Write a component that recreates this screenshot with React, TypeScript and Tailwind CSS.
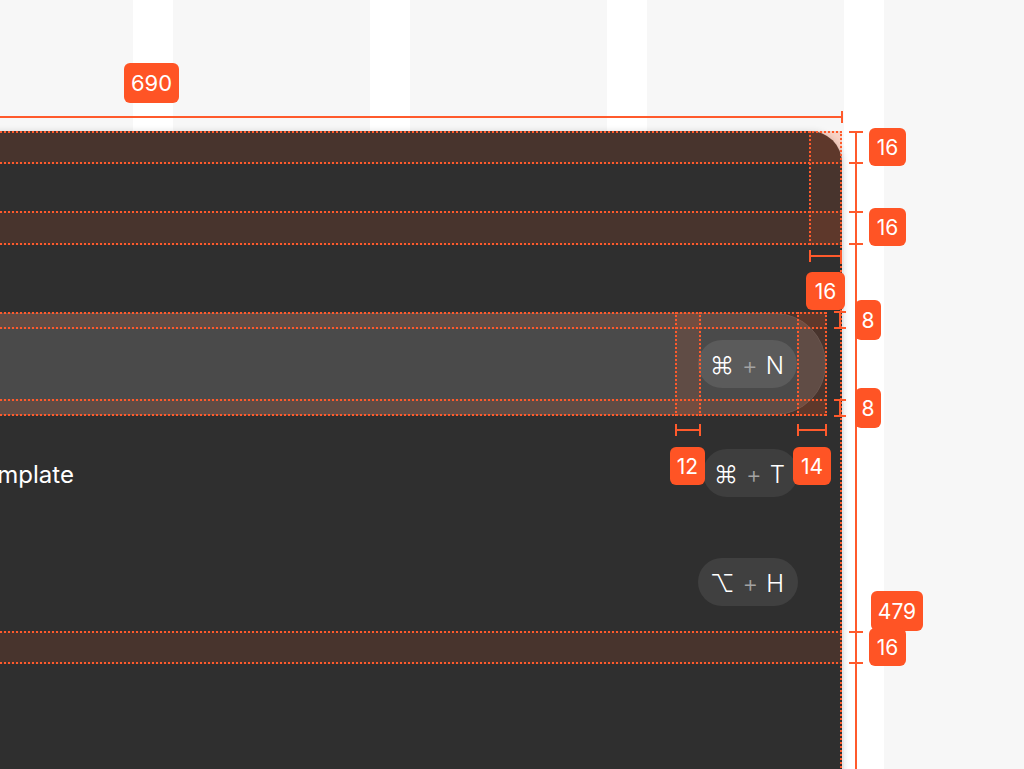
import clsx from 'clsx';

const ORANGE = 'bg-[#ff5a2c]';

function Tag({ text, className }: { text: string; className: string }) {
  return (
    <div
      className={clsx(
        'absolute flex items-center justify-center rounded-[6px] bg-[#ff5425] text-[21px] leading-none text-white',
        className,
      )}
    >
      {text}
    </div>
  );
}

function HBracket({ className }: { className: string }) {
  return (
    <div className={clsx('absolute flex h-[12px] items-center border-x-2 border-[#ff5a2c]', className)}>
      <div className={clsx('h-[2px] w-full', ORANGE)} />
    </div>
  );
}

function VBracket({ className }: { className: string }) {
  return (
    <div className={clsx('absolute flex w-[12px] justify-center border-y-2 border-[#ff5a2c]', className)}>
      <div className={clsx('h-full w-[2px]', ORANGE)} />
    </div>
  );
}

function Tick({ className }: { className: string }) {
  return <div className={clsx('absolute left-[849px] h-[2px] w-[14px]', ORANGE, className)} />;
}

function Keycap({ mod, keyName, tone }: { mod: string; keyName: string; tone: string }) {
  return (
    <div className={clsx('flex h-12 items-center gap-[8px] rounded-full pt-[3px] text-[24px] font-light text-white', tone)}>
      <span>{mod}</span>
      <span className="text-[#a3a3a3]">+</span>
      <span>{keyName}</span>
    </div>
  );
}

const rows = [
  { label: 'New note', mod: '⌘', key: 'N', active: true, tone: 'bg-[#5b5b5b] pl-[12px] pr-[13px]' },
  { label: 'New from template', mod: '⌘', key: 'T', active: false, tone: 'bg-[#3e3e3e] pl-[11px] pr-[13px]' },
  { label: 'History', mod: '⌥', key: 'H', active: false, tone: 'bg-[#404040] pl-[12px] pr-[14px]' },
];

export default function App() {
  return (
    <div
      className="relative h-[769px] w-[1024px] overflow-hidden bg-[#f7f7f7] pt-[131px]"
      style={{ fontFamily: 'Inter, "DejaVu Sans", sans-serif' }}
    >
      {/* grid columns */}
      <div className="absolute inset-0 flex gap-[197px] pl-[133px]">
        <div className="h-full w-[40px] bg-white" />
        <div className="h-full w-[40px] bg-white" />
        <div className="h-full w-[40px] bg-white" />
        <div className="h-full w-[40px] bg-white" />
      </div>

      {/* panel */}
      <div className="relative ml-[-538px] flex h-[760px] w-[1380px] flex-col rounded-[32px] bg-[#2f2f2f] p-8 shadow-[2px_0_6px_rgba(0,0,0,0.12)]">
        <div className="h-12 shrink-0" />
        <div className="mt-[33px] h-[69px] shrink-0" />
        <div className="-mx-4 flex flex-col gap-[7px]">
          {rows.map((r) => (
            <div
              key={r.label}
              className={clsx(
                'flex h-[102px] items-center gap-6 rounded-full py-4 pl-8 pr-[28px]',
                r.active && 'border border-[#565656] bg-[#4a4a4a]',
              )}
            >
              <span className="flex-1 pl-[348px] pt-[3px] text-[24px] text-white">{r.label}</span>
              <Keycap mod={r.mod} keyName={r.key} tone={r.tone} />
            </div>
          ))}
        </div>
      </div>

      {/* shaded spacing overlays */}
      <div className="absolute left-0 top-[131px] h-[33px] w-[842px] border-y-2 border-dotted border-[#ff5a2c] bg-[#ff5722]/12" />
      <div className="absolute left-0 top-[211px] h-[34px] w-[842px] border-y-2 border-dotted border-[#ff5a2c] bg-[#ff5722]/12" />
      <div className="absolute left-[809px] top-[131px] h-[114px] w-[33px] border-l-2 border-dotted border-[#ff5a2c] bg-[#ff5722]/12" />
      <div className="absolute left-[840px] top-[131px] h-[640px] w-[2px] border-l-2 border-dotted border-[#ff5a2c]" />

      <div className="absolute left-0 top-[312px] h-[17px] w-[826px] border-y-2 border-dotted border-[#ff5a2c] bg-[#ff5722]/12" />
      <div className="absolute left-0 top-[399px] h-[17px] w-[826px] border-y-2 border-dotted border-[#ff5a2c] bg-[#ff5722]/12" />
      <div className="absolute left-[675px] top-[312px] h-[104px] w-[26px] border-x-2 border-dotted border-[#ff5a2c] bg-[#ff5722]/12" />
      <div className="absolute left-[797px] top-[312px] h-[104px] w-[30px] border-x-2 border-dotted border-[#ff5a2c] bg-[#ff5722]/12" />

      <div className="absolute left-0 top-[631px] h-[33px] w-[842px] border-y-2 border-dotted border-[#ff5a2c] bg-[#ff5722]/12" />

      {/* width measure */}
      <div className={clsx('absolute left-0 top-[116px] h-[2px] w-[842px]', ORANGE)} />
      <div className={clsx('absolute left-[841px] top-[111px] h-[12px] w-[2px]', ORANGE)} />
      <Tag text="690" className="left-[124px] top-[63px] h-[40px] w-[55px] text-[22px]" />

      {/* vertical measure */}
      <div className={clsx('absolute left-[855px] top-[131px] h-[640px] w-[2px]', ORANGE)} />
      <Tick className="top-[131px]" />
      <Tick className="top-[162px]" />
      <Tick className="top-[211px]" />
      <Tick className="top-[243px]" />
      <Tick className="top-[631px]" />
      <Tick className="top-[662px]" />
      <Tag text="16" className="left-[869px] top-[128px] h-[38px] w-[37px]" />
      <Tag text="16" className="left-[869px] top-[208px] h-[38px] w-[37px]" />
      <Tag text="479" className="left-[871px] top-[591px] h-[40px] w-[52px]" />
      <Tag text="16" className="left-[869px] top-[628px] h-[38px] w-[37px]" />

      {/* padding right measure */}
      <HBracket className="left-[809px] top-[250px] w-[33px]" />
      <Tag text="16" className="left-[806px] top-[272px] h-[38px] w-[39px]" />

      {/* row padding */}
      <VBracket className="left-[834px] top-[311px] h-[18px]" />
      <VBracket className="left-[834px] top-[399px] h-[18px]" />
      <Tag text="8" className="left-[855px] top-[300px] h-[40px] w-[26px]" />
      <Tag text="8" className="left-[855px] top-[388px] h-[40px] w-[26px]" />

      <HBracket className="left-[675px] top-[424px] w-[26px]" />
      <HBracket className="left-[797px] top-[424px] w-[30px]" />
      <Tag text="12" className="left-[670px] top-[447px] h-[38px] w-[35px]" />
      <Tag text="14" className="left-[793px] top-[447px] h-[38px] w-[38px]" />
    </div>
  );
}
